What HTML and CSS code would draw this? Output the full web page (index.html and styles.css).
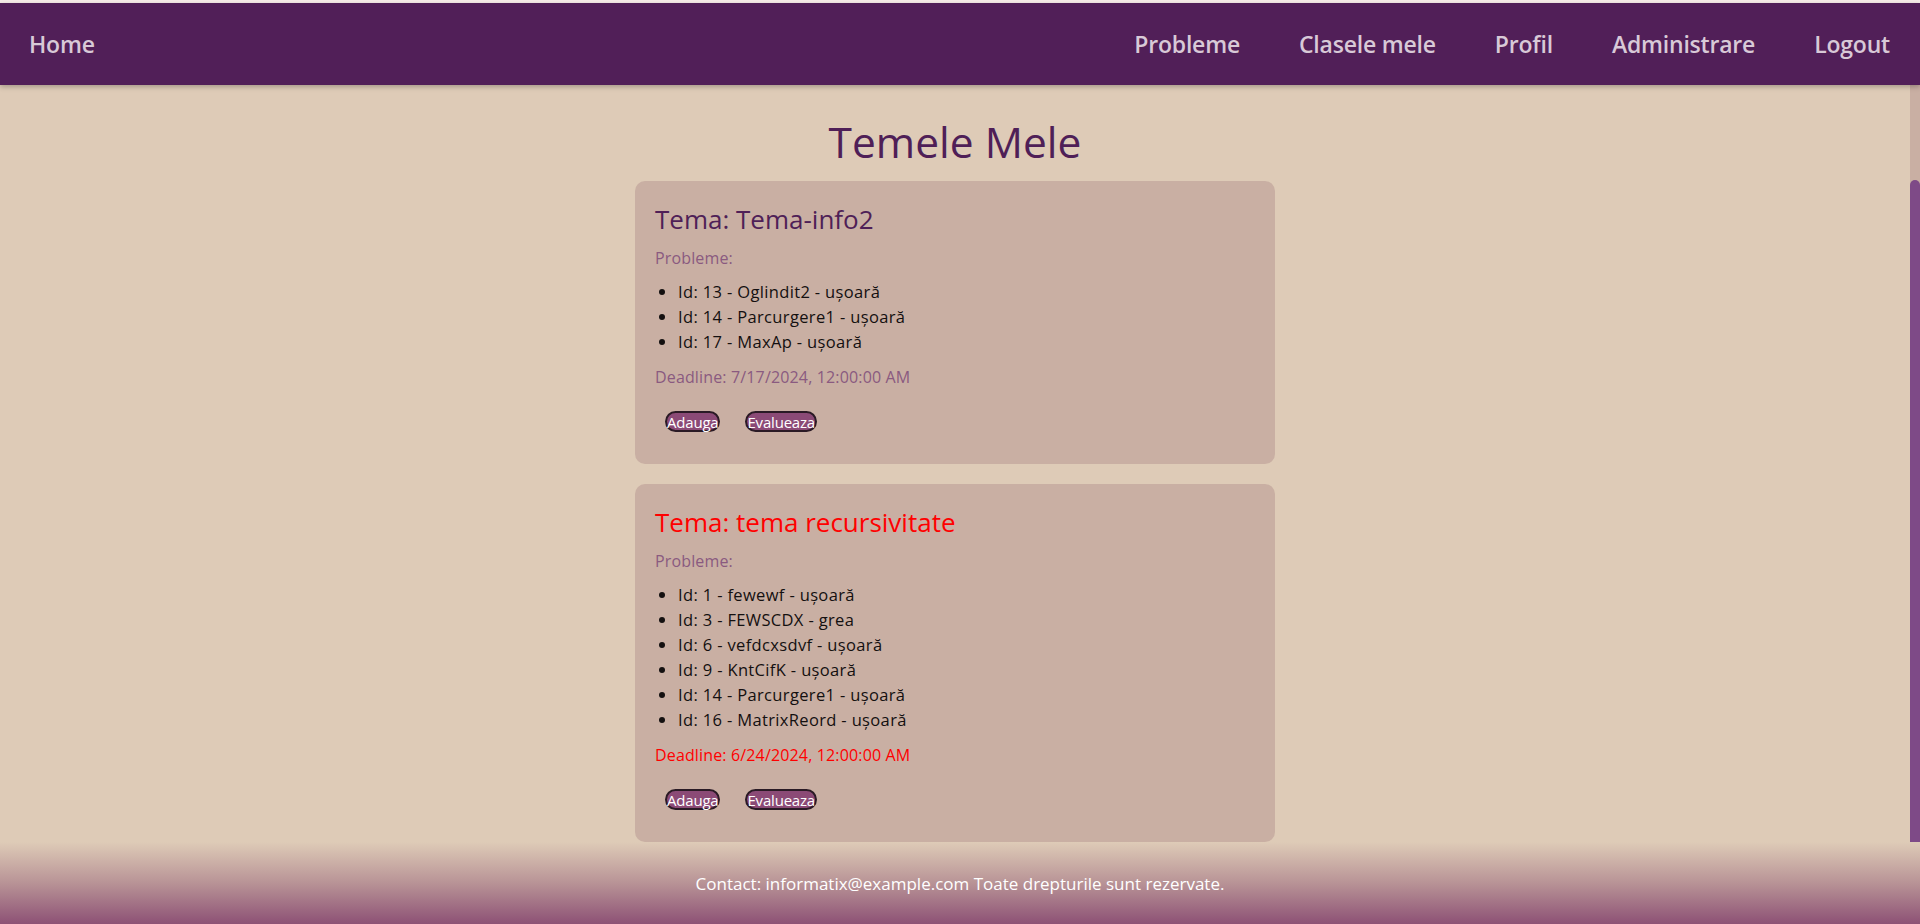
FILE: index.html
```html
<!DOCTYPE html>
<html lang="ro">
<head>
<meta charset="utf-8">
<title>Temele Mele</title>
<link rel="stylesheet" href="styles.css">
</head>
<body>
<nav class="navbar">
  <a class="nav-link" href="#">Home</a>
  <div class="nav-right">
    <a class="nav-link" href="#">Probleme</a>
    <a class="nav-link" href="#">Clasele mele</a>
    <a class="nav-link" href="#">Profil</a>
    <a class="nav-link" href="#">Administrare</a>
    <a class="nav-link" href="#">Logout</a>
  </div>
</nav>
<main class="main">
  <div class="scroll-view">
    <div class="content">
      <h1 class="page-title">Temele Mele</h1>
      <section class="card">
        <h3 class="card-title">Tema: Tema-info2</h3>
        <p class="label">Probleme:</p>
        <ul class="prob-list">
          <li>Id: 13 - Oglindit2 - ușoară</li>
          <li>Id: 14 - Parcurgere1 - ușoară</li>
          <li>Id: 17 - MaxAp - ușoară</li>
        </ul>
        <p class="label deadline">Deadline: 7/17/2024, 12:00:00 AM</p>
        <div class="actions">
          <button class="btn">Adauga</button>
          <button class="btn">Evalueaza</button>
        </div>
      </section>
      <section class="card expired">
        <h3 class="card-title">Tema: tema recursivitate</h3>
        <p class="label">Probleme:</p>
        <ul class="prob-list">
          <li>Id: 1 - fewewf - ușoară</li>
          <li>Id: 3 - FEWSCDX - grea</li>
          <li>Id: 6 - vefdcxsdvf - ușoară</li>
          <li>Id: 9 - KntCifK - ușoară</li>
          <li>Id: 14 - Parcurgere1 - ușoară</li>
          <li>Id: 16 - MatrixReord - ușoară</li>
        </ul>
        <p class="label deadline">Deadline: 6/24/2024, 12:00:00 AM</p>
        <div class="actions">
          <button class="btn">Adauga</button>
          <button class="btn">Evalueaza</button>
        </div>
      </section>
    </div>
  </div>
  <div class="scrollbar"><div class="scroll-thumb"></div></div>
</main>
<footer class="footer">
  <p>Contact: informatix@example.com Toate drepturile sunt rezervate.</p>
</footer>
</body>
</html>
```
FILE: styles.css
```css
* { box-sizing: border-box; }

html, body {
  height: 100%;
}

body {
  margin: 0;
  padding-top: 3px;
  height: 100vh;
  overflow: hidden;
  display: flex;
  flex-direction: column;
  background: #f6ece8;
  font-family: "Open Sans", "Noto Sans", sans-serif;
}

.navbar {
  flex: none;
  height: 82px;
  display: flex;
  align-items: center;
  background: #511f58;
  box-shadow: 0 2px 5px rgba(0, 0, 0, 0.25);
  position: relative;
  z-index: 2;
}

.nav-right {
  margin-left: auto;
  display: flex;
}

.nav-link {
  color: #d8c9d7;
  text-decoration: none;
  font-size: 23px;
  font-weight: 600;
  padding: 0 30px 0 29px;
  letter-spacing: -0.2px;
}

.main {
  flex: 1;
  min-height: 0;
  display: flex;
  background: #decbb7;
}

.scroll-view {
  flex: 1;
  min-width: 0;
  overflow: hidden;
  display: flex;
  flex-direction: column-reverse;
}

.scrollbar {
  flex: none;
  width: 10px;
  background: #c9afa3;
  padding-top: 95px;
  display: flex;
  flex-direction: column;
}

.scroll-thumb {
  flex: 1;
  background: #7e4a87;
  border-radius: 5px 5px 0 0;
}

.content {
  flex: none;
  display: flex;
  flex-direction: column;
  align-items: center;
  padding-top: 135px;
}

.page-title {
  margin: 0 0 9px;
  font-size: 42.5px;
  line-height: 60px;
  font-weight: 500;
  color: #4f1f57;
}

.card {
  width: 640px;
  background: #c9afa3;
  border-radius: 10px;
  padding: 20px;
  margin-bottom: 20px;
}

.card:last-child {
  margin-bottom: 0;
}

.card-title {
  margin: 0 0 9px;
  font-size: 26px;
  line-height: 36px;
  font-weight: 500;
  color: #4f1f57;
}

.label {
  margin: 0;
  font-size: 16px;
  line-height: 24px;
  letter-spacing: 0.15px;
  color: #8a5a80;
}

.prob-list {
  margin: 9px 0 0;
  padding-left: 23px;
  font-size: 16.5px;
  line-height: 25px;
  letter-spacing: 0.35px;
  color: #141010;
}

.deadline {
  margin-top: 11px;
}

.expired .card-title,
.expired .deadline {
  color: #ff0000;
}

.actions {
  margin: 22px 0 12px;
  display: flex;
  gap: 25px;
  padding-left: 10px;
  height: 21px;
}

.btn {
  height: 21px;
  padding: 0;
  font-family: "Open Sans", "Noto Sans", sans-serif;
  font-size: 15px;
  line-height: 16px;
  color: #ffffff;
  background: #8b4a76;
  border: 2px solid #2a1a25;
  border-bottom-width: 2.5px;
  border-radius: 11px;
  letter-spacing: -0.2px;
}

.footer {
  flex: none;
  height: 82px;
  display: flex;
  align-items: center;
  justify-content: center;
  background: linear-gradient(to bottom, #decbb7 0%, #b89396 50%, #8d5175 100%);
}

.footer p {
  margin: 0;
  color: #ffffff;
  font-size: 17px;
}
```
